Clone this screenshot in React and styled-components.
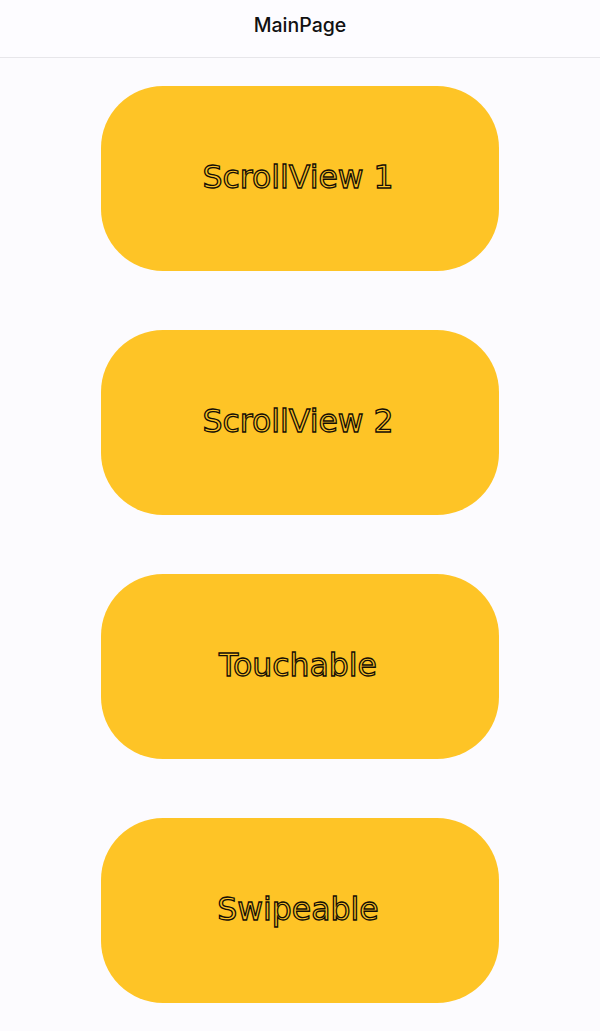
import React from 'react';
import styled, { createGlobalStyle } from 'styled-components';

const GlobalStyle = createGlobalStyle`
  html, body {
    margin: 0;
    padding: 0;
    background: #fcfbfe;
    font-family: "Liberation Sans", Arial, sans-serif;
  }
  * { box-sizing: border-box; }
`;

const Screen = styled.div`
  width: 600px;
  min-height: 1031px;
  background: #fcfbfe;
`;

const Header = styled.header`
  height: 58px;
  display: flex;
  align-items: center;
  justify-content: center;
  border-bottom: 1px solid #e7e6ea;
  background: #fdfcff;
  padding-bottom: 7px;
`;

const Title = styled.div`
  font-family: Inter, "Liberation Sans", sans-serif;
  font-size: 19.5px;
  font-weight: 500;
  color: #111;
`;

const List = styled.main`
  display: flex;
  flex-direction: column;
  align-items: center;
  gap: 59px;
  padding-top: 28px;
`;

// labels are outlined: the fill matches the button, only the stroke is dark
const NavButton = styled.button`
  width: 398px;
  height: 185px;
  border: none;
  border-radius: 62px;
  background: #fec426;
  display: flex;
  align-items: center;
  justify-content: center;
  cursor: pointer;
  font-family: "DejaVu Sans", Verdana, sans-serif;
  font-size: 31.5px;
  color: #fec426;
  -webkit-text-stroke: 1.3px #140e05;
  padding: 0 4px 4px 0;
`;

const items = ['ScrollView 1', 'ScrollView 2', 'Touchable', 'Swipeable'];

export default function App() {
  return (
    <Screen>
      <GlobalStyle />
      <Header>
        <Title>MainPage</Title>
      </Header>
      <List>
        {items.map(label => (
          <NavButton key={label}>{label}</NavButton>
        ))}
      </List>
    </Screen>
  );
}
